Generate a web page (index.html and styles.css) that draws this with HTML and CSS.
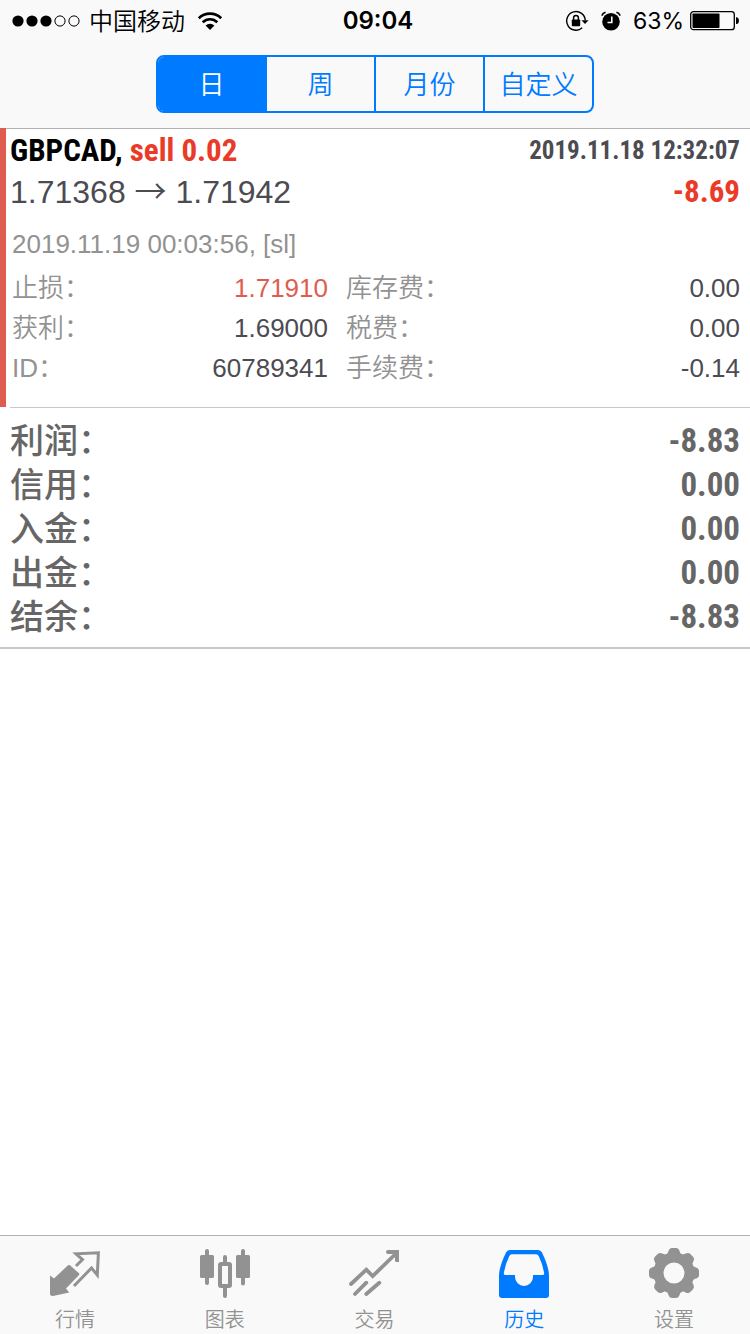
FILE: index.html
```html
<!DOCTYPE html>
<html lang="zh-CN">
<head>
<meta charset="utf-8">
<meta name="viewport" content="width=device-width, initial-scale=1">
<title>历史</title>
<link rel="stylesheet" href="styles.css">
</head>
<body>
<div class="app">
  <header class="header">
    <div class="status">
      <div class="status-left">
        <svg width="68" height="12" viewBox="0 0 68 12" aria-hidden="true"><circle cx="6" cy="6" r="5.6"/><circle cx="20" cy="6" r="5.6"/><circle cx="34" cy="6" r="5.6"/><g fill="none" stroke="#000" stroke-width="1"><circle cx="48" cy="6" r="5.1"/><circle cx="62" cy="6" r="5.1"/></g></svg>
        <span class="carrier">中国移动</span>
        <svg class="wifi" width="26" height="20" viewBox="0 0 26 20" aria-hidden="true"><g fill="none" stroke="#000" stroke-width="2.6"><path d="M1.8 7.2a16 16 0 0 1 22.4 0"/><path d="M5.7 11.2a10.4 10.4 0 0 1 14.6 0"/></g><path d="M13 19l-4.400-4.500a6.200 6.200 0 0 1 8.800 0z"/></svg>
      </div>
      <time class="clock">09:04</time>
      <div class="status-right">
        <svg width="24" height="22" viewBox="0 0 24 22" aria-hidden="true"><path d="M17.2 17.8A9.3 9.3 0 1 1 20.3 10.5" fill="none" stroke="#000" stroke-width="1.4"/><path d="M16.5 10.3h7l-3.5 3.8z"/><rect x="6.800" y="9.500" width="8.400" height="6.800" rx=".8"/><path d="M8.600 10V7.800a2.400 2.400 0 0 1 4.800 0V10" fill="none" stroke="#000" stroke-width="1.500"/></svg>
        <svg class="alarm" width="20" height="20" viewBox="0 0 20 20" aria-hidden="true"><circle cx="10" cy="10.800" r="8.800"/><path d="M10.800 5.500v6H6.500" fill="none" stroke="#f9f9f9" stroke-width="1.600"/><path d="M.8 4.600A6 6 0 0 1 4.600 1.300M15.400 1.300a6 6 0 0 1 3.800 3.300" fill="none" stroke="#000" stroke-width="1.600"/></svg>
        <span class="percent">63%</span>
        <svg width="50" height="20" viewBox="0 0 50 20" aria-hidden="true"><rect x=".7" y=".7" width="43.600" height="18" rx="2.800" fill="none" stroke="#000" stroke-width="1.300"/><rect x="2.500" y="2.500" width="27" height="14.500" rx=".8"/><path d="M46 6.300h1q2 .8 2 3.400t-2 3.400h-1z"/></svg>
      </div>
    </div>
    <div class="segments">
      <button class="segment active" type="button" aria-pressed="true">日</button>
      <button class="segment" type="button">周</button>
      <button class="segment" type="button">月份</button>
      <button class="segment" type="button">自定义</button>
    </div>
  </header>

  <main class="content">
    <article class="deal">
      <div class="row deal-title">
        <h1 class="symbol">GBPCAD, <span class="sell">sell 0.02</span></h1>
        <time class="open-time">2019.11.18 12:32:07</time>
      </div>
      <div class="row deal-price">
        <span>1.71368 <span class="arrow">→</span> 1.71942</span>
        <strong class="loss">-8.69</strong>
      </div>
      <p class="close-time">2019.11.19 00:03:56, [sl]</p>
      <div class="details">
        <dl class="detail-list">
          <div class="row"><dt>止损：</dt><dd class="stop">1.71910</dd></div>
          <div class="row"><dt>获利：</dt><dd>1.69000</dd></div>
          <div class="row"><dt>ID：</dt><dd>60789341</dd></div>
        </dl>
        <dl class="detail-list">
          <div class="row"><dt>库存费：</dt><dd>0.00</dd></div>
          <div class="row"><dt>税费：</dt><dd>0.00</dd></div>
          <div class="row"><dt>手续费：</dt><dd>-0.14</dd></div>
        </dl>
      </div>
    </article>
    <dl class="totals">
      <div class="row"><dt>利润：</dt><dd>-8.83</dd></div>
      <div class="row"><dt>信用：</dt><dd>0.00</dd></div>
      <div class="row"><dt>入金：</dt><dd>0.00</dd></div>
      <div class="row"><dt>出金：</dt><dd>0.00</dd></div>
      <div class="row"><dt>结余：</dt><dd>-8.83</dd></div>
    </dl>
  </main>

  <nav class="tabs">
    <a class="tab" href="#quotes">
      <svg class="tab-icon" viewBox="0 0 52 52" aria-hidden="true"><path fill="currentColor" d="M1 28.500l4 3L19 18.300q1-.8 2 0l9 8q.8.800 0 1.600L17 41.500l3.200 4L4 48.900q-3 0-3-2.200z"/><path d="M27 19l6.500-6.500-6.500-5.700L49.400 5.800 48.300 28l-5.800-7L25 39" fill="none" stroke="currentColor" stroke-width="3"/></svg>
      <span>行情</span>
    </a>
    <a class="tab" href="#charts">
      <svg class="tab-icon" viewBox="0 0 52 52" aria-hidden="true"><g fill="currentColor"><rect x="1" y="8" width="14" height="23" rx="1.500"/><rect x="6" y="2" width="4" height="36" rx="2"/><rect x="37" y="8" width="14" height="23" rx="1.500"/><rect x="42" y="2" width="4" height="36.500" rx="2"/><path d="M24 15v-5a2 2 0 0 1 4 0v5zM24 40h4v9a2 2 0 0 1-4 0z"/></g><rect x="21" y="17" width="10" height="22" rx="1" fill="none" stroke="currentColor" stroke-width="4"/></svg>
      <span>图表</span>
    </a>
    <a class="tab" href="#trade">
      <svg class="tab-icon" viewBox="0 0 52 52" aria-hidden="true"><path d="M3 37l15.300-14.300 6.400 6.400L48 6.500M7 47l11.300-11.300M18.300 47l13-11.300" fill="none" stroke="currentColor" stroke-width="3.800" stroke-linecap="round"/><path d="M40 3H51v12h-2.500q-1.500 0-1.500-1.500V7h-7q-2 0-2-2t2-2z" fill="currentColor"/></svg>
      <span>交易</span>
    </a>
    <a class="tab active" href="#history" aria-current="page">
      <svg class="tab-icon" viewBox="0 0 52 52" aria-hidden="true"><path fill="currentColor" fill-rule="evenodd" d="M12 3h28q3 0 4 2.500Q51 20 51 29v19q0 3-3 3H4q-3 0-3-3V29Q1 20 8 5.500 9 3 12 3zM14 7.300q-2 0-2.800 2Q7 18 5.800 26.500 5.600 28 7 28h10v2a9 9 0 0 0 18 0v-2h10q1.400 0 1.200-1.500Q45 18 40.800 9.300q-.8-2-2.800-2z"/></svg>
      <span>历史</span>
    </a>
    <a class="tab" href="#settings">
      <svg class="tab-icon" viewBox="0 0 52 52" aria-hidden="true"><defs><path id="tooth" d="M17.500 9Q19.500 7.500 20.500 4 21.500 1 24 1h4q2.500 0 3.500 3 1 3.500 3 5z"/></defs><circle cx="26" cy="26" r="15.500" fill="none" stroke="currentColor" stroke-width="10"/><g fill="currentColor"><use href="#tooth"/><use href="#tooth" transform="rotate(45 26 26)"/><use href="#tooth" transform="rotate(90 26 26)"/><use href="#tooth" transform="rotate(135 26 26)"/><use href="#tooth" transform="rotate(180 26 26)"/><use href="#tooth" transform="rotate(225 26 26)"/><use href="#tooth" transform="rotate(270 26 26)"/><use href="#tooth" transform="rotate(315 26 26)"/></g></svg>
      <span>设置</span>
    </a>
  </nav>
</div>
</body>
</html>
```
FILE: styles.css
```css
* { box-sizing: border-box; }

body {
  margin: 0;
  background: #fff;
  color: #4c4b52;
  font-family: "Liberation Sans", "Noto Sans CJK SC", sans-serif;
  font-size: 26px;
}

h1, p, dl, dd { margin: 0; }

.app {
  display: flex;
  flex-direction: column;
  min-height: 100vh;
}

.header {
  background: #f9f9f9;
  border-bottom: 1px solid #b2b2b2;
  padding-bottom: 15px;
}

.status {
  display: grid;
  grid-template-columns: 1fr auto 1fr;
  align-items: center;
  height: 40px;
  padding: 0 10px 0 12px;
  color: #000;
  font-family: Inter, "Noto Sans CJK SC", sans-serif;
  font-size: 24px;
  line-height: 40px;
}

.status-left, .status-right { display: flex; align-items: center; }
.status-right { justify-content: flex-end; }
.carrier { margin-left: 9px; padding-top: 2px; font-weight: 350; }
.wifi { margin-left: 12px; }
.clock { padding-left: 4px; font-weight: 600; }
.alarm { margin-left: 12px; }
.percent { margin: 0 6px 0 12px; font-size: 23px; }

.segments {
  display: flex;
  width: 100%;
  max-width: 438px;
  height: 58px;
  margin: 15px auto 0;
  border: 2px solid #007aff;
  border-radius: 8px;
  overflow: hidden;
}

.segment {
  flex: 1;
  padding: 0 0 4px;
  border: 0;
  border-left: 2px solid #007aff;
  background: none;
  color: #007aff;
  font-family: "Noto Sans CJK SC", sans-serif;
  font-size: 26px;
  font-weight: 350;
}

.segment:first-child { border-left: 0; }
.segment.active { background: #007aff; color: #fff; }

.content { flex: 1; }

.row {
  display: flex;
  justify-content: space-between;
}

.deal {
  position: relative;
  padding: 2px 10px 19px;
}

.deal::before {
  content: "";
  position: absolute;
  top: -1px;
  bottom: 0;
  left: 0;
  width: 6px;
  background: #df5d50;
}

.deal-title, .deal-price .loss, .totals dd {
  font-family: "Helvetica Neue Condensed", "Roboto Condensed", "Open Sans Condensed", "Noto Sans Condensed", Roboto, sans-serif;
  font-weight: 700;
}

.deal-title { line-height: 40px; }
.symbol { color: #000; font-size: 31px; }
.sell, .loss { color: #e93b28; }
.open-time { font-size: 25px; }

.deal-price { font-size: 32px; line-height: 42px; }
.arrow { font-family: "Noto Sans CJK SC", sans-serif; font-weight: 350; line-height: 1; }
.deal-price .loss { font-size: 31px; }

.close-time {
  margin: 11px 0 4px;
  padding-left: 2px;
  color: #929292;
  line-height: 40px;
}

.details {
  display: grid;
  grid-template-columns: 316fr 394fr;
  gap: 18px;
  padding-left: 2px;
  line-height: 40px;
}

.details .row { height: 40px; }
.details dt { color: #929292; font-weight: 350; }
.details .stop { color: #df5d50; }

.totals {
  padding: 12px 10px 8px;
  border-bottom: 2px solid #c8c7cc;
  background: linear-gradient(#c8c8c8, #c8c8c8) 10px 0 / 100% 1px no-repeat;
  color: #666;
  font-size: 34px;
  line-height: 44px;
}

.totals .row { height: 44px; }
.totals dt { font-weight: 500; }
.totals dd { font-size: 33px; }

.tabs {
  display: flex;
  padding-right: 1px;
  border-top: 1px solid #b2b2b2;
  background: #f9f9f9;
}

.tab {
  display: flex;
  flex: 1;
  flex-direction: column;
  align-items: center;
  padding-top: 11px;
  color: #929292;
  font-family: "Noto Sans CJK SC", sans-serif;
  font-size: 20px;
  font-weight: 350;
  line-height: 30px;
  text-decoration: none;
}

.tab span { padding-top: 5px; }
.tab.active { color: #007aff; }
.tab-icon { width: 52px; height: 52px; }
```
